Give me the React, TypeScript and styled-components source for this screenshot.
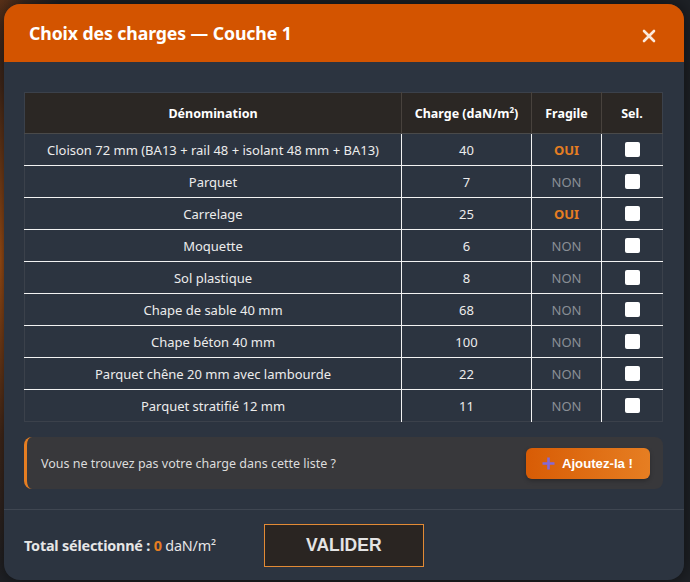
import React from "react";
import styled, { createGlobalStyle } from "styled-components";

const Global = createGlobalStyle`
  html, body { margin: 0; padding: 0; }
  body {
    width: 690px;
    height: 582px;
    overflow: hidden;
    background:
      radial-gradient(ellipse 40px 320px at 0px 260px, rgba(200, 95, 20, 0.85), rgba(130, 55, 10, 0.4) 55%, transparent 100%),
      radial-gradient(ellipse 60px 60px at 0px 0px, rgba(120, 60, 20, 0.6), transparent 100%),
      #1f2227;
    font-family: "Noto Sans", "Open Sans", sans-serif;
  }
`;

const Stage = styled.div`
  padding: 4px 6px 2px 4px;
  box-sizing: border-box;
  height: 582px;
`;

const Modal = styled.div`
  width: 680px;
  height: 576px;
  background: #2c3440;
  border-radius: 16px;
  overflow: hidden;
  display: flex;
  flex-direction: column;
  box-shadow: 0 0 20px rgba(0, 0, 0, 0.6);
`;

const Header = styled.div`
  height: 58px;
  flex: none;
  background: #d35400;
  display: flex;
  align-items: center;
  justify-content: space-between;
  padding: 0 25px 0 25px;
  box-sizing: border-box;
`;

const Title = styled.h2`
  margin: 0;
  color: #fff;
  font-size: 17.7px;
  font-weight: 700;
  letter-spacing: -0.1px;
`;

const Close = styled.button`
  background: none;
  border: none;
  padding: 0;
  margin-top: 6px;
  width: 20px;
  height: 20px;
  display: flex;
  align-items: center;
  justify-content: center;
  cursor: pointer;
`;

const Body = styled.div`
  padding: 30px 21px 20px 20px;
  border-bottom: 1px solid #3f4651;
  display: flex;
  flex-direction: column;
  gap: 15px;
`;

const Table = styled.table`
  width: 639px;
  border-collapse: collapse;
  border: 1px solid #3b414b;
  table-layout: fixed;
  font-size: 13px;
  color: #ececec;
`;

const Th = styled.th<{ $w: number }>`
  width: ${(p) => p.$w}px;
  height: 40px;
  background: #2b2724;
  color: #fff;
  font-weight: 700;
  font-size: 12.5px;
  text-align: center;
  border-left: 1px solid #48423d;
  border-bottom: 1px solid #4a4a4a;
  padding: 0;
  &:first-child { border-left: none; }
`;

const Td = styled.td`
  height: 31px;
  text-align: center;
  padding: 0;
  border-left: 1px solid #f2f2f2;
  border-top: 1px solid #f2f2f2;
  white-space: nowrap;
  &:first-child { border-left: none; }
`;

const Row = styled.tr`
  &:first-child td { border-top: none; }
`;

const Frag = styled.span<{ $yes: boolean }>`
  color: ${(p) => (p.$yes ? "#e67e22" : "#8a8f96")};
  font-weight: ${(p) => (p.$yes ? 700 : 400)};
`;

const Check = styled.span`
  display: inline-block;
  width: 15px;
  height: 15px;
  background: #fff;
  border-radius: 2px;
  vertical-align: middle;
  margin-top: -3px;
`;

const Info = styled.div`
  height: 52px;
  background: #38383b;
  border-left: 3px solid #e67e22;
  border-radius: 8px;
  display: flex;
  align-items: center;
  justify-content: space-between;
  padding: 0 13px 0 14px;
  box-sizing: border-box;
  width: 639px;
`;

const InfoText = styled.span`
  color: #dcdcdc;
  font-size: 12.5px;
`;

const AddBtn = styled.button`
  height: 31px;
  padding: 0 17px 0 16px;
  border: none;
  border-radius: 6px;
  background: linear-gradient(90deg, #d85c05, #e67e22);
  color: #fff;
  font-family: "Liberation Sans", Arial, sans-serif;
  font-weight: 700;
  font-size: 13.2px;
  display: flex;
  align-items: center;
  gap: 7px;
  box-shadow: 0 2px 4px rgba(0, 0, 0, 0.25);
`;

const Footer = styled.div`
  flex: 1;
  display: flex;
  align-items: center;
  padding: 0 20px;
  gap: 48px;
`;

const Total = styled.div`
  color: #e6e6e6;
  font-size: 14.4px;
  font-weight: 700;
  letter-spacing: -0.2px;
`;

const Num = styled.span`
  color: #e67e22;
`;

const Unit = styled.span`
  font-weight: 400;
`;

const Validate = styled.button`
  width: 160px;
  height: 43px;
  background: #2a2522;
  border: 1px solid #e28a35;
  color: #e4e4e4;
  font-family: "Liberation Sans", Arial, sans-serif;
  font-weight: 700;
  font-size: 17.5px;
  margin-top: 1px;
`;

const rows: [string, number, boolean][] = [
  ["Cloison 72 mm (BA13 + rail 48 + isolant 48 mm + BA13)", 40, true],
  ["Parquet", 7, false],
  ["Carrelage", 25, true],
  ["Moquette", 6, false],
  ["Sol plastique", 8, false],
  ["Chape de sable 40 mm", 68, false],
  ["Chape béton 40 mm", 100, false],
  ["Parquet chêne 20 mm avec lambourde", 22, false],
  ["Parquet stratifié 12 mm", 11, false],
];

export default function App() {
  return (
    <>
      <Global />
      <Stage>
        <Modal>
          <Header>
            <Title>Choix des charges — Couche 1</Title>
            <Close aria-label="Fermer">
              <svg width="14" height="14" viewBox="0 0 14 14">
                <path d="M2 2 L12 12 M12 2 L2 12" stroke="#fbe9dc" strokeWidth="2.6" strokeLinecap="round" />
              </svg>
            </Close>
          </Header>
          <Body>
            <Table>
              <thead>
                <tr>
                  <Th $w={376}>Dénomination</Th>
                  <Th $w={129}>
                    Charge (daN/m<sup style={{ fontSize: "8px" }}>2</sup>)
                  </Th>
                  <Th $w={69}>Fragile</Th>
                  <Th $w={60}>Sel.</Th>
                </tr>
              </thead>
              <tbody>
                {rows.map(([name, charge, fragile]) => (
                  <Row key={name}>
                    <Td>{name}</Td>
                    <Td>{charge}</Td>
                    <Td>
                      <Frag $yes={fragile}>{fragile ? "OUI" : "NON"}</Frag>
                    </Td>
                    <Td>
                      <Check />
                    </Td>
                  </Row>
                ))}
              </tbody>
            </Table>
            <Info>
              <InfoText>Vous ne trouvez pas votre charge dans cette liste ?</InfoText>
              <AddBtn>
                <svg width="13" height="13" viewBox="0 0 13 13">
                  <path d="M6.5 0.5 V12.5 M0.5 6.5 H12.5" stroke="#8468d6" strokeWidth="2.6" />
                </svg>
                Ajoutez-la !
              </AddBtn>
            </Info>
          </Body>
          <Footer>
            <Total>
              Total sélectionné : <Num>0</Num> <Unit>daN/m²</Unit>
            </Total>
            <Validate>VALIDER</Validate>
          </Footer>
        </Modal>
      </Stage>
    </>
  );
}
